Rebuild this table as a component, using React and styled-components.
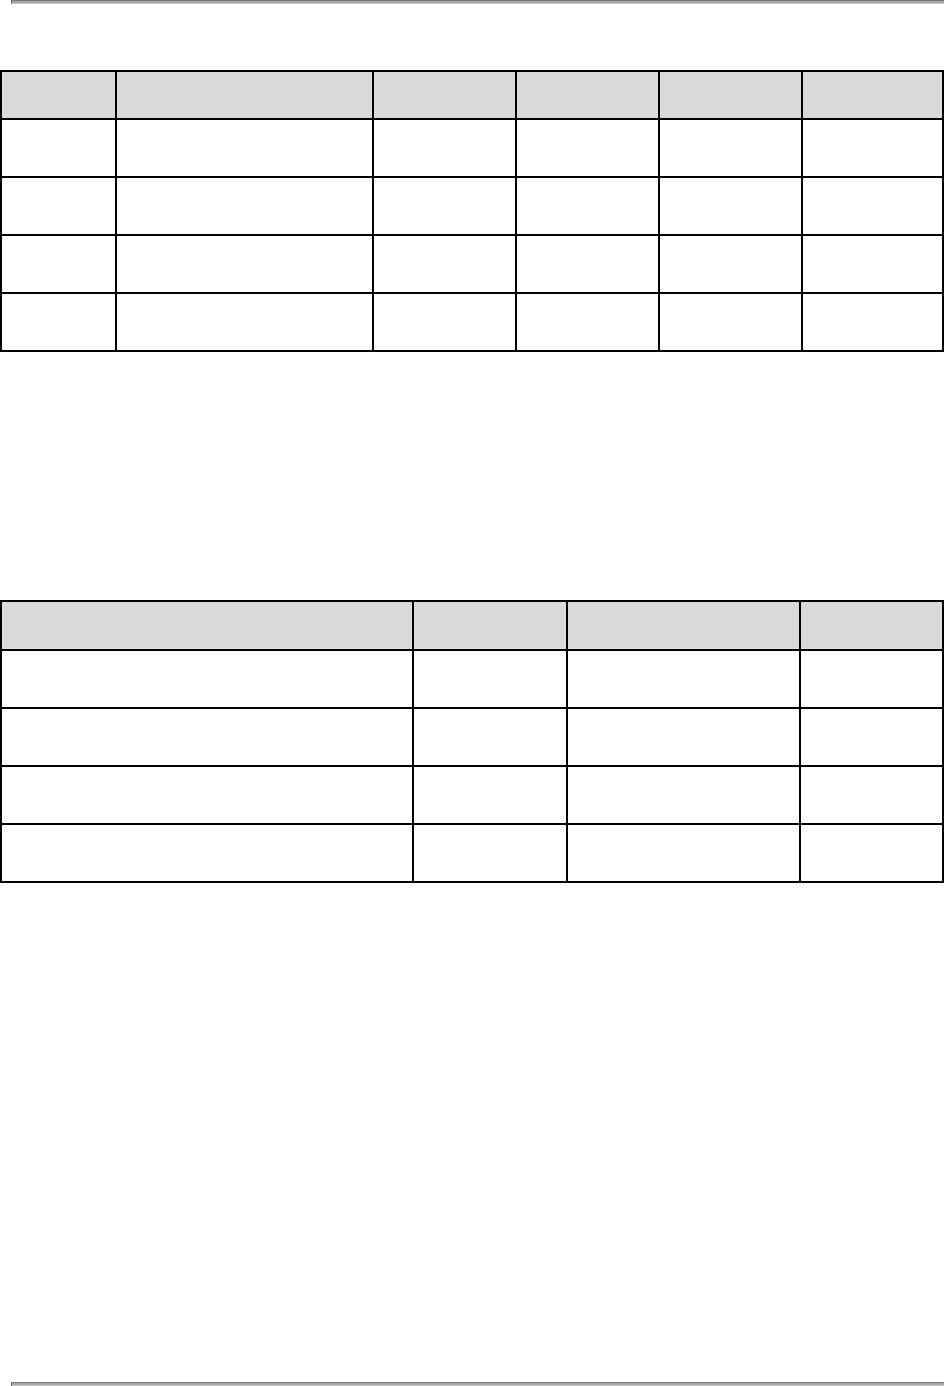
import React from "react";
import styled, { createGlobalStyle } from "styled-components";

const Global = createGlobalStyle`
  html, body {
    margin: 0;
    padding: 0;
    background: #ffffff;
    font-family: "Liberation Sans", Arial, sans-serif;
  }
  * { box-sizing: border-box; }
`;

const Page = styled.div`
  width: 948px;
  height: 1386px;
  display: flex;
  flex-direction: column;
  background: #ffffff;
`;

const Rule = styled.div`
  margin-left: 11px;
  width: 933px;
  height: 4px;
  flex: none;
  background: linear-gradient(
    to bottom,
    #7a7a7a 0px,
    #7a7a7a 1px,
    #a3a3a3 1px,
    #a9a9a9 3px,
    #c9c9c9 3px,
    #c9c9c9 4px
  );
  border-left: 1px solid #6e6e6e;
  margin-top: ${(p) => p.$top || 0}px;
`;

const Grid = styled.div`
  display: grid;
  grid-template-columns: ${(p) => p.$cols.map((c) => `${c}px`).join(" ")};
  grid-template-rows: ${(p) => p.$head}px repeat(${(p) => p.$rows}, 58px);
  width: 944px;
  flex: none;
  border-left: 2px solid #000;
  border-top: 2px solid #000;
  margin-top: ${(p) => p.$top}px;
`;

const Cell = styled.div`
  border-right: 2px solid #000;
  border-bottom: 2px solid #000;
  background: ${(p) => (p.$head ? "#d9d9d9" : "#ffffff")};
  font-size: 14px;
  color: #000;
`;

function Table({ cols, head, rows, top }) {
  const cells = [];
  for (let r = 0; r <= rows; r++) {
    cols.forEach((_, c) => {
      cells.push(<Cell key={`${r}-${c}`} $head={r === 0} />);
    });
  }
  return (
    <Grid $cols={cols} $head={head} $rows={rows} $top={top}>
      {cells}
    </Grid>
  );
}

export default function App() {
  return (
    <>
      <Global />
      <Page>
        <Rule />
        <Table cols={[115, 257, 143, 143, 143, 141]} head={48} rows={4} top={66} />
        <Table cols={[412, 154, 233, 143]} head={49} rows={4} top={248} />
        <Rule $top={499} />
      </Page>
    </>
  );
}
